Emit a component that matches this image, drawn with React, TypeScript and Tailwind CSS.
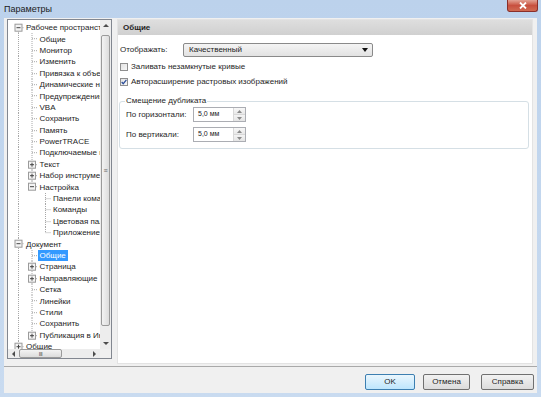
type Row = {
  t: string;
  l: number;
  k?: "open" | "closed";
  last?: boolean;
  first?: boolean;
  sel?: boolean;
  anc: boolean[];
};

const rows: Row[] = [
  { t: "Рабочее пространство", l: 0, k: "open", first: true, anc: [] },
  { t: "Общие", l: 1, anc: [true] },
  { t: "Монитор", l: 1, anc: [true] },
  { t: "Изменить", l: 1, anc: [true] },
  { t: "Привязка к объектам", l: 1, anc: [true] },
  { t: "Динамические направляющие", l: 1, anc: [true] },
  { t: "Предупреждения", l: 1, anc: [true] },
  { t: "VBA", l: 1, anc: [true] },
  { t: "Сохранить", l: 1, anc: [true] },
  { t: "Память", l: 1, anc: [true] },
  { t: "PowerTRACE", l: 1, anc: [true] },
  { t: "Подключаемые модули", l: 1, anc: [true] },
  { t: "Текст", l: 1, k: "closed", anc: [true] },
  { t: "Набор инструментов", l: 1, k: "closed", anc: [true] },
  { t: "Настройка", l: 1, k: "open", last: true, anc: [true] },
  { t: "Панели команд", l: 2, anc: [true, false] },
  { t: "Команды", l: 2, anc: [true, false] },
  { t: "Цветовая палитра", l: 2, anc: [true, false] },
  { t: "Приложение", l: 2, last: true, anc: [true, false] },
  { t: "Документ", l: 0, k: "open", anc: [] },
  { t: "Общие", l: 1, sel: true, anc: [true] },
  { t: "Страница", l: 1, k: "closed", anc: [true] },
  { t: "Направляющие", l: 1, k: "closed", anc: [true] },
  { t: "Сетка", l: 1, anc: [true] },
  { t: "Линейки", l: 1, anc: [true] },
  { t: "Стили", l: 1, anc: [true] },
  { t: "Сохранить", l: 1, anc: [true] },
  { t: "Публикация в Интернете", l: 1, k: "closed", last: true, anc: [true] },
  { t: "Общие", l: 0, k: "closed", last: true, anc: [] },
];

const RH = 11.4;
const cx = (l: number) => 10.5 + 13.5 * l;
const tx = (l: number) => 18 + 13.5 * l;

function TreeRow({ r }: { r: Row }) {
  const w = tx(r.l) - 2;
  const c = cx(r.l);
  const mid = RH / 2;
  const line = { stroke: "#a8a8a8", strokeWidth: 1, strokeDasharray: "1 1" };
  return (
    <div className="flex h-[11.4px] items-center whitespace-nowrap">
      <svg width={w} height={RH} className="shrink-0">
        {r.anc.map((on, i) =>
          on ? <line key={i} x1={cx(i)} x2={cx(i)} y1={0} y2={RH} {...line} /> : null
        )}
        <line x1={c} x2={c} y1={r.first ? mid : 0} y2={r.last ? mid : RH} {...line} />
        <line x1={c} x2={w} y1={mid} y2={mid} {...line} />
        {r.k && (
          <g>
            <rect x={c - 3.5} y={mid - 3.5} width={7} height={7} fill="#f4f4f4" stroke="#9a9a9a" strokeWidth={1} />
            <line x1={c - 2} x2={c + 2} y1={mid} y2={mid} stroke="#444" strokeWidth={1} />
            {r.k === "closed" && <line x1={c} x2={c} y1={mid - 2} y2={mid + 2} stroke="#444" strokeWidth={1} />}
          </g>
        )}
      </svg>
      <span
        className={
          r.sel
            ? "bg-[#3399ff] px-[2px] leading-[11px] text-white"
            : "px-[2px] leading-[11px] text-[#1e1e1e]"
        }
      >
        {r.t}
      </span>
    </div>
  );
}

function Arrow({ dir }: { dir: "up" | "down" | "left" | "right" }) {
  const pts = {
    up: "1,4 4,1 7,4",
    down: "1,1 4,4 7,1",
    left: "4,1 1,4 4,7",
    right: "1,1 4,4 1,7",
  }[dir];
  const vertical = dir === "up" || dir === "down";
  return (
    <svg width={vertical ? 8 : 5} height={vertical ? 5 : 8}>
      <polygon points={pts} fill="#4d4d4d" />
    </svg>
  );
}

function Spin({ value }: { value: string }) {
  return (
    <div className="flex h-[15px] w-[53px] border border-[#abadb3] bg-white">
      <div className="flex flex-1 items-center pl-[4px] text-[7px] text-[#222]">{value}</div>
      <div className="flex w-[12px] flex-col border-l border-[#d8d8d8]">
        <div className="flex flex-1 items-center justify-center bg-gradient-to-b from-[#f8f8f8] to-[#e8e8e8]">
          <svg width="5" height="3"><polygon points="0,3 2.5,0 5,3" fill="#8a8a8a" /></svg>
        </div>
        <div className="flex flex-1 items-center justify-center border-t border-[#d8d8d8] bg-gradient-to-b from-[#f4f4f4] to-[#e4e4e4]">
          <svg width="5" height="3"><polygon points="0,0 2.5,3 5,0" fill="#8a8a8a" /></svg>
        </div>
      </div>
    </div>
  );
}

export default function App() {
  return (
    <div className="flex h-[397px] w-[541px] flex-col bg-gradient-to-b from-[#bcd2ec] to-[#c9dbf0] font-['Liberation_Sans',Arial,sans-serif] text-[8px] text-[#1e1e1e]">
      <div className="flex h-[18px] items-start justify-between pl-[4px] pr-[3px]">
        <span className="mt-[3px] text-[9px] leading-[12px] text-[#1a1a1a]">Параметры</span>
        <div className="flex h-[12px] w-[31px] items-center justify-center rounded-b-[3px] border border-t-0 border-[#8a2f2a] bg-gradient-to-b from-[#e2a294] via-[#c8503f] to-[#d06a52]">
          <svg width="8" height="7" viewBox="0 0 8 7">
            <path d="M1 0.5 L7 6.5 M7 0.5 L1 6.5" stroke="#fff" strokeWidth="1.8" />
          </svg>
        </div>
      </div>

      <div className="mx-[4px] mb-[4px] flex flex-1 flex-col bg-[#f0f0f0]">
        <div className="flex h-[348px] gap-[5px] pl-[3px] pr-[4px] pt-[1px]">
          {/* tree */}
          <div className="grid h-[340px] w-[105px] grid-cols-[1fr_11px] grid-rows-[1fr_9px] border border-[#828790] bg-white">
            <div className="overflow-hidden pt-[2px]">
              {rows.map((r, i) => (
                <TreeRow key={i} r={r} />
              ))}
            </div>
            <div className="flex flex-col items-stretch bg-[#ededed]">
              <div className="flex h-[11px] items-center justify-center">
                <Arrow dir="up" />
              </div>
              <div className="flex-1">
                <div className="mx-[1px] mt-[4px] flex h-[291px] items-center justify-center rounded-[2px] border border-[#9a9a9a] bg-gradient-to-r from-[#f3f3f3] to-[#dcdcdc] pb-[20px] text-[7px] leading-none text-[#666]">
                  ≡
                </div>
              </div>
              <div className="flex h-[11px] items-center justify-center">
                <Arrow dir="down" />
              </div>
            </div>
            <div className="flex items-center bg-[#ededed]">
              <div className="flex w-[11px] justify-center">
                <Arrow dir="left" />
              </div>
              <div className="flex h-[9px] w-[43px] items-center justify-center rounded-[2px] border border-[#9a9a9a] bg-gradient-to-b from-[#f3f3f3] to-[#dcdcdc] text-[6px] leading-none tracking-[-0.5px] text-[#555]">
                III
              </div>
              <div className="flex-1" />
              <div className="flex w-[11px] justify-center">
                <Arrow dir="right" />
              </div>
            </div>
            <div className="bg-[#f0f0f0]" />
          </div>

          {/* right panel */}
          <div className="flex h-[345px] flex-1 flex-col border border-[#e3e3e3] bg-white">
            <div className="flex h-[15px] items-center bg-gradient-to-b from-[#dedede] to-[#d0d0d0] pl-[5px] font-bold text-[#1e1e1e]">
              Общие
            </div>
            <div className="flex flex-col whitespace-nowrap px-[1px] pt-[8px]">
              <div className="flex h-[14px] items-center">
                <span className="w-[64px] pl-[1px]">Отображать:</span>
                <div className="flex h-[14px] w-[190px] items-center justify-between rounded-[2px] border border-[#8a8a8a] bg-gradient-to-b from-[#f4f4f4] to-[#e2e2e2] pl-[5px] pr-[4px]">
                  <span>Качественный</span>
                  <svg width="6" height="4"><polygon points="0,0 6,0 3,4" fill="#111" /></svg>
                </div>
              </div>
              <div className="mt-[5px] flex h-[10px] items-center gap-[3px] pl-[1px]">
                <div className="h-[8px] w-[8px] border border-[#8f8f8f] bg-gradient-to-br from-[#e2e2e2] to-[#f7f7f7]" />
                <span>Заливать незамкнутые кривые</span>
              </div>
              <div className="mt-[5px] flex h-[10px] items-center gap-[3px] pl-[1px]">
                <div className="flex h-[8px] w-[8px] items-center justify-center border border-[#8f8f8f] bg-gradient-to-br from-[#e2e2e2] to-[#f7f7f7]">
                  <svg width="7" height="6" viewBox="0 0 7 6">
                    <path d="M0.8 3 L2.6 5 L6.3 0.6" stroke="#2a4c9a" strokeWidth="1.4" fill="none" />
                  </svg>
                </div>
                <span>Авторасширение растровых изображений</span>
              </div>
              <fieldset className="mr-[2px] mt-[9px] rounded-[3px] border border-[#d5dfe5] pb-[6px] pl-[6px]">
                <legend className="ml-[-1px] px-[1px] leading-[10px]">Смещение дубликата</legend>
                <div className="mt-[1px] flex h-[15px] items-center">
                  <span className="w-[67px]">По горизонтали:</span>
                  <Spin value="5,0 мм" />
                </div>
                <div className="mt-[5px] flex h-[15px] items-center">
                  <span className="w-[67px]">По вертикали:</span>
                  <Spin value="5,0 мм" />
                </div>
              </fieldset>
            </div>
          </div>
        </div>

        <div className="border-t border-[#a9a9a9]" />
        <div className="flex flex-1 items-center justify-end pr-[3px] pt-[3px]">
          <button className="h-[16px] w-[50px] rounded-[2px] border border-[#3c7fb1] bg-gradient-to-b from-[#eaf6fd] to-[#bee6fd] text-[8px] text-[#1e1e1e]">
            OK
          </button>
          <button className="ml-[8px] h-[16px] w-[47px] rounded-[2px] border border-[#707070] bg-gradient-to-b from-[#f2f2f2] to-[#dcdcdc] text-[8px] text-[#1e1e1e]">
            Отмена
          </button>
          <button className="ml-[11px] h-[16px] w-[53px] rounded-[2px] border border-[#707070] bg-gradient-to-b from-[#f2f2f2] to-[#dcdcdc] text-[8px] text-[#1e1e1e]">
            Справка
          </button>
        </div>
      </div>
    </div>
  );
}
